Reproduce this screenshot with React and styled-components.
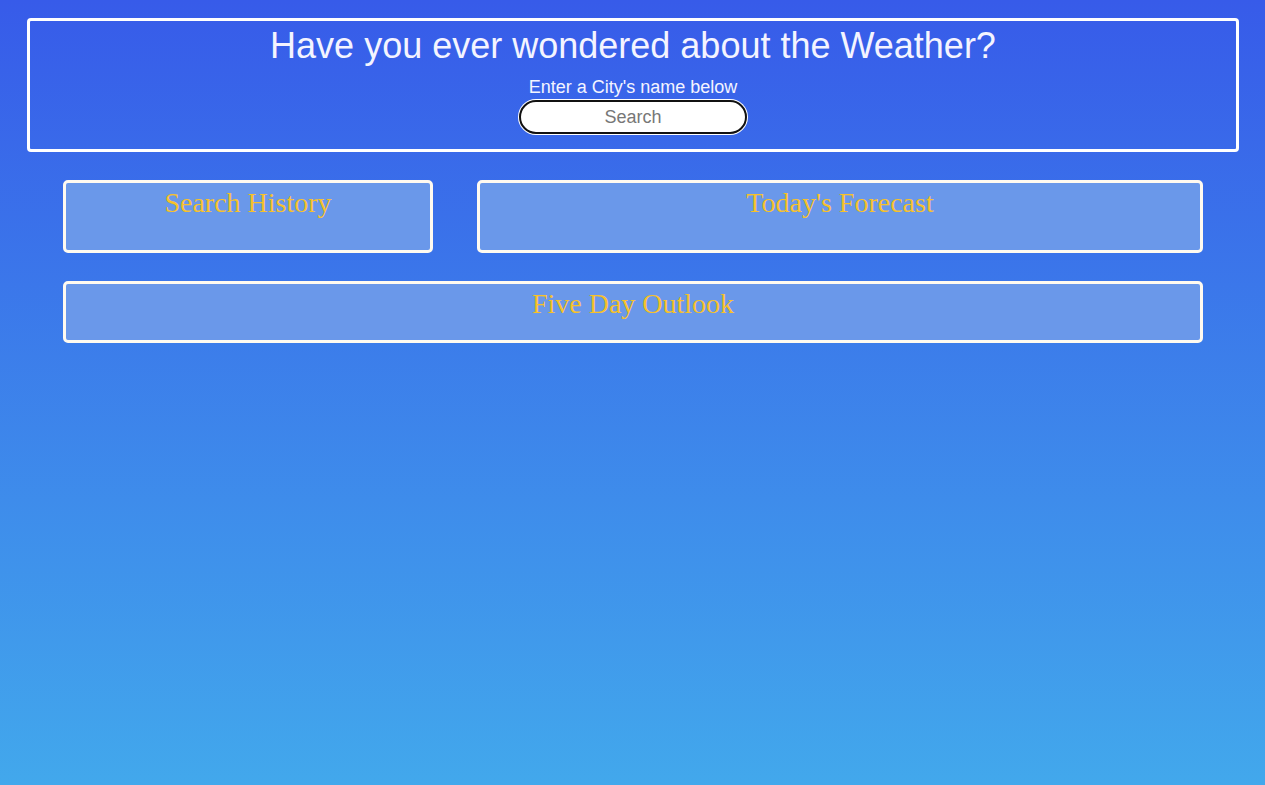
import React from "react";
import styled, { createGlobalStyle } from "styled-components";

const Global = createGlobalStyle`
  html, body { margin: 0; padding: 0; }
  body {
    min-height: 785px;
    background: linear-gradient(180deg, #375be9 0%, #42a8ec 100%);
    font-family: "Liberation Sans", Arial, sans-serif;
  }
`;

const Page = styled.div`
  min-height: 785px;
  padding: 18px 26px 0 27px;
  box-sizing: border-box;
`;

const Header = styled.header`
  height: 134px;
  box-sizing: border-box;
  border: 3px solid #ffffff;
  border-radius: 4px;
  display: flex;
  flex-direction: column;
  align-items: center;
  color: #f4f4ff;
`;

const Title = styled.h1`
  margin: 4px 0 0;
  font-weight: 400;
  font-size: 36px;
  line-height: 42px;
`;

const Sub = styled.p`
  margin: 10px 0 0;
  font-size: 18px;
  line-height: 20px;
`;

const Search = styled.input`
  margin-top: 3px;
  width: 228px;
  height: 34px;
  box-sizing: border-box;
  border: 2px solid #111;
  border-radius: 17px;
  box-shadow: 0 0 0 1px #ffffff;
  background: #fff;
  text-align: center;
  font-family: "Liberation Sans", Arial, sans-serif;
  font-size: 18px;
  color: #222;
  outline: none;
  &::placeholder { color: #777; }
`;

const Content = styled.main`
  padding: 28px 36px 0 36px;
  display: flex;
  flex-direction: column;
  gap: 28px;
`;

const Row = styled.div`
  display: flex;
  gap: 44px;
`;

const Card = styled.section`
  box-sizing: border-box;
  height: ${(p) => p.$h}px;
  flex: ${(p) => p.$flex || "1 1 auto"};
  background: #6a98ea;
  border: 3px solid #fffaf0;
  border-radius: 5px;
  text-align: center;
`;

const CardTitle = styled.h2`
  margin: 4px 0 0;
  font-family: "Liberation Serif", "Times New Roman", serif;
  font-weight: 400;
  font-size: 28px;
  line-height: 32px;
  color: #f6c12c;
`;

export default function App() {
  return (
    <>
      <Global />
      <Page>
        <Header>
          <Title>Have you ever wondered about the Weather?</Title>
          <Sub>Enter a City's name below</Sub>
          <Search placeholder="Search" autoFocus />
        </Header>
        <Content>
          <Row>
            <Card $h={73} $flex="0 0 370px">
              <CardTitle>Search History</CardTitle>
            </Card>
            <Card $h={73} $flex="1 1 auto">
              <CardTitle>Today's Forecast</CardTitle>
            </Card>
          </Row>
          <Card $h={62}>
            <CardTitle>Five Day Outlook</CardTitle>
          </Card>
        </Content>
      </Page>
    </>
  );
}
